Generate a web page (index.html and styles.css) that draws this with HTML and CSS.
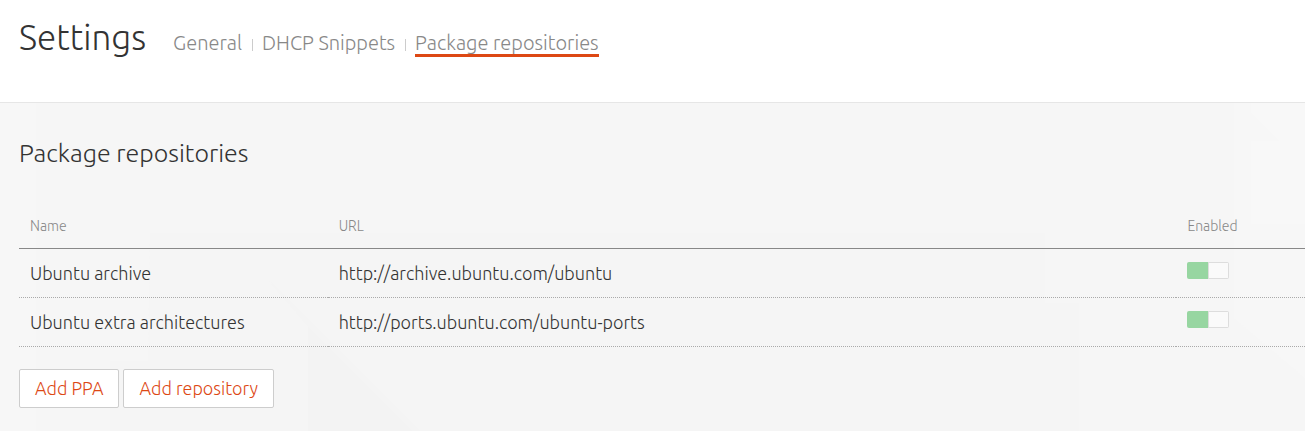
FILE: index.html
```html
<!DOCTYPE html>
<html lang="en">
<head>
<meta charset="utf-8">
<meta name="viewport" content="width=device-width, initial-scale=1">
<title>Settings</title>
<link rel="stylesheet" href="styles.css">
</head>
<body>
<header class="page-header">
  <h1 class="page-title">Settings</h1>
  <nav aria-label="Settings sections">
    <ul class="tabs">
      <li class="tab-item"><a class="tab" href="#general">General</a></li>
      <li class="tab-item"><a class="tab" href="#dhcp">DHCP Snippets</a></li>
      <li class="tab-item"><a class="tab tab-active" href="#repositories" aria-current="page">Package repositories</a></li>
    </ul>
  </nav>
</header>
<main class="content">
  <svg class="backdrop" viewBox="0 0 1305 328" preserveAspectRatio="none" aria-hidden="true">
    <path fill="#f7f7f7" d="M0 0h36v328H0zM1234 0h71v275l-71-60z"/>
    <path fill="#f8f8f8" d="M1251 10l28 28h26V0h-54zM1251 38h54v83h-54z"/>
    <path fill="#f5f5f5" d="M150 130h895v70h34v128H110v-70h38z"/>
    <path fill="#f4f4f4" d="M265 173l155 155H308V223l-43-50z"/>
    <path fill="#f3f3f3" d="M308 223l105 105H308z"/>
  </svg>
  <h2 class="section-title">Package repositories</h2>
  <table class="repos">
    <thead>
      <tr><th class="col-name" scope="col">Name</th><th class="col-url" scope="col">URL</th><th class="col-enabled" scope="col">Enabled</th></tr>
    </thead>
    <tbody>
      <tr><td>Ubuntu archive</td><td>http://archive.ubuntu.com/ubuntu</td><td><input class="switch" type="checkbox" aria-label="Enable Ubuntu archive" checked></td></tr>
      <tr><td>Ubuntu extra architectures</td><td>http://ports.ubuntu.com/ubuntu-ports</td><td><input class="switch" type="checkbox" aria-label="Enable Ubuntu extra architectures" checked></td></tr>
    </tbody>
  </table>
  <div class="actions">
    <button class="button" type="button">Add PPA</button>
    <button class="button" type="button">Add repository</button>
  </div>
</main>
</body>
</html>
```
FILE: styles.css
```css
* { box-sizing: border-box; }

body {
  display: flex;
  flex-direction: column;
  min-height: 100vh;
  margin: 0;
  background: #fff;
  color: #333;
  font-family: Ubuntu, "Noto Sans", "Open Sans", sans-serif;
  font-size: 18px;
  font-weight: 300;
}

.page-header {
  display: flex;
  align-items: baseline;
  gap: 27px;
  padding: 13px 19px 41px;
  border-bottom: 1px solid #e6e6e6;
}

.page-title {
  margin: 0;
  font-size: 35px;
  font-weight: 300;
  line-height: 48px;
}

.tabs {
  display: flex;
  margin: 0;
  padding: 0;
  list-style: none;
}

.tab-item {
  display: flex;
  align-items: center;
}

.tab-item + .tab-item::before {
  width: 1px;
  height: 12px;
  margin: 0 9px 0 10px;
  background: #ccc;
  content: "";
}

.tab {
  border-bottom: 3px solid transparent;
  color: #888;
  font-size: 20px;
  line-height: 22px;
  text-decoration: none;
}

.tab-active { border-bottom-color: #dd4814; }

.content {
  position: relative;
  z-index: 0;
  flex: 1;
  padding: 32px 0 23px 19px;
  background: #f6f6f6;
}

.backdrop {
  position: absolute;
  inset: 0;
  z-index: -1;
  width: 100%;
  height: 100%;
}

.section-title {
  margin: 0 0 32px;
  font-size: 25px;
  font-weight: 300;
  line-height: 36px;
}

.repos {
  width: 100%;
  border-collapse: collapse;
  table-layout: fixed;
  text-align: left;
}

.repos th {
  height: 45px;
  padding: 2px 11px 0;
  color: #888;
  font-size: 14px;
  font-weight: 300;
}

.repos thead tr { border-bottom: 1px solid #888; }

.repos tbody tr { border-bottom: 1px dotted #aaa; }

.repos td {
  height: 49px;
  padding: 0 11px;
}

.col-name { width: 24%; }
.col-url { width: 66%; }
.col-enabled { width: 10%; }

.switch {
  display: block;
  width: 42px;
  height: 17px;
  margin: 0 0 4px;
  appearance: none;
  border: 1px solid #ddd;
  border-radius: 2px;
  background: #fafafa;
}

.switch:checked {
  border: 0;
  background:
    linear-gradient(#97d6a1, #97d6a1) left / 21px 17px no-repeat,
    linear-gradient(#fafafa, #fafafa) 22px 1px / 19px 15px no-repeat,
    #ddd;
}

.actions {
  display: flex;
  gap: 4px;
  margin-top: 22px;
}

.button {
  height: 39px;
  padding: 0 15px;
  border: 1px solid #cdcdcd;
  border-radius: 2px;
  background: #fff;
  color: #dd4814;
  font: inherit;
}
```
